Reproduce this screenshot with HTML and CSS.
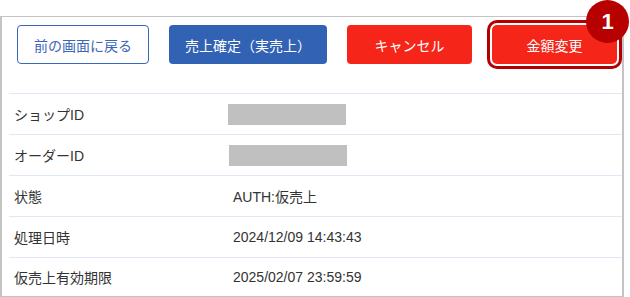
FILE: index.html
```html
<!DOCTYPE html>
<html>
	<head>
		<title>取引詳細</title>
		<link rel="stylesheet" href="styles.css">
	</head>
	<body>
		<div class="panel">
			<div class="toolbar">
				<button class="btn btn-outline">前の画面に戻る</button>
				<button class="btn btn-blue">売上確定（実売上）</button>
				<button class="btn btn-red">キャンセル</button>
				<button class="btn btn-red btn-marked">金額変更<span class="badge">1</span></button>
			</div>
			<div class="rows">
				<div class="row">
					<div class="label">ショップID</div>
					<div class="value"><span class="mask"></span></div>
				</div>
				<div class="row">
					<div class="label">オーダーID</div>
					<div class="value"><span class="mask mask-2"></span></div>
				</div>
				<div class="row">
					<div class="label">状態</div>
					<div class="value">AUTH:仮売上</div>
				</div>
				<div class="row">
					<div class="label">処理日時</div>
					<div class="value">2024/12/09 14:43:43</div>
				</div>
				<div class="row row-last">
					<div class="label">仮売上有効期限</div>
					<div class="value">2025/02/07 23:59:59</div>
				</div>
			</div>
		</div>
	</body>
</html>
```

FILE: styles.css
```css
body {
	margin: 0;
	background: #ffffff;
	color: #333333;
	font-family: "Liberation Sans", "Noto Sans CJK JP", sans-serif;
	font-size: 14px;
}

.panel {
	box-sizing: border-box;
	width: 624px;
	margin-top: 16px;
	border: 1px solid #c4c4c4;
	border-left-width: 2px;
	border-right-width: 2px;
}

.toolbar {
	display: flex;
	gap: 20px;
	height: 76px;
	padding: 8px 0 0 15px;
	box-sizing: border-box;
}

.btn {
	position: relative;
	height: 39px;
	min-width: 125px;
	padding: 0 15px;
	border: 1px solid transparent;
	border-radius: 4px;
	font-family: inherit;
	font-size: 14px;
	color: #ffffff;
	cursor: pointer;
}

.btn-outline {
	padding: 0 16px;
	background: #ffffff;
	border-color: #3a66b8;
	color: #3a66b8;
}

.btn-blue {
	background: #3162b3;
}

.btn-red {
	background: #f52519;
}

.btn-marked {
	box-shadow: 0 0 0 2px #ffffff, 0 0 0 5px #b40000;
	border-radius: 5px;
}

.badge {
	position: absolute;
	left: 93px;
	top: -26px;
	width: 43px;
	height: 43px;
	border-radius: 50%;
	background: #b70000;
	color: #ffffff;
	font-size: 22px;
	font-weight: bold;
	line-height: 43px;
	text-align: center;
}

.rows {
	margin-left: 7px;
	border-top: 1px solid #dfe9f6;
}

.row {
	display: grid;
	grid-template-columns: 219px 1fr;
	align-items: center;
	height: 40px;
	border-bottom: 1px solid #dfe9f6;
}

.row-last {
	height: 38px;
	border-bottom: none;
}

.label,
.value {
	padding-left: 5px;
}

.mask {
	display: block;
	width: 118px;
	height: 21px;
	margin-left: -5px;
	background: #c0c0c0;
}

.mask-2 {
	margin-left: -4px;
}
```
